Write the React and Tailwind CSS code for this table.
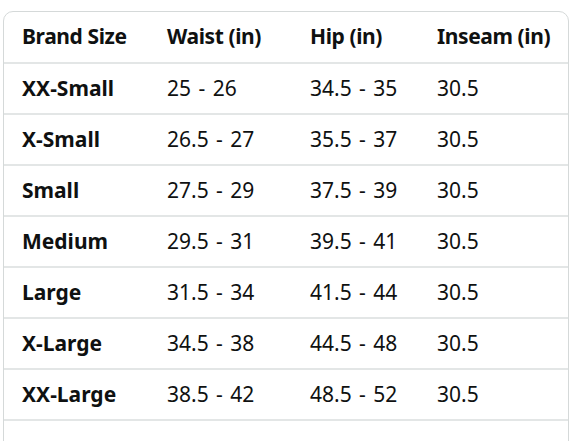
const rows = [
  ["XX-Small", "25 - 26", "34.5 - 35", "30.5"],
  ["X-Small", "26.5 - 27", "35.5 - 37", "30.5"],
  ["Small", "27.5 - 29", "37.5 - 39", "30.5"],
  ["Medium", "29.5 - 31", "39.5 - 41", "30.5"],
  ["Large", "31.5 - 34", "41.5 - 44", "30.5"],
  ["X-Large", "34.5 - 38", "44.5 - 48", "30.5"],
  ["XX-Large", "38.5 - 42", "48.5 - 52", "30.5"],
];

export default function App() {
  return (
    <div className="h-[441px] overflow-hidden bg-white pl-[3px] pt-[11px] font-['Noto_Sans',sans-serif] text-[#0f1111]">
      <div className="w-[566px] overflow-hidden rounded-t-[10px] border border-[#d5d9d9]">
        <table className="w-full border-collapse text-left text-[21px]">
          <colgroup>
            <col className="w-[145px]" />
            <col className="w-[143px]" />
            <col className="w-[127px]" />
            <col />
          </colgroup>
          <thead>
            <tr className="h-[51px] border-b-2 border-[#e3e6e6] tracking-[-0.4px]">
              <th className="pl-[18px] font-bold">Brand Size</th>
              <th className="pl-[18px] font-bold">Waist (in)</th>
              <th className="pl-[18px] font-bold">Hip (in)</th>
              <th className="pl-[18px] font-bold">Inseam (in)</th>
            </tr>
          </thead>
          <tbody>
            {rows.map((r) => (
              <tr key={r[0]} className="h-[51px] border-b-2 border-[#e3e6e6] [word-spacing:2px]">
                <td className="pl-[18px] font-bold">{r[0]}</td>
                <td className="pl-[18px]">{r[1]}</td>
                <td className="pl-[18px]">{r[2]}</td>
                <td className="pl-[18px]">{r[3]}</td>
              </tr>
            ))}
            <tr className="h-[51px]">
              <td colSpan={4}></td>
            </tr>
          </tbody>
        </table>
      </div>
    </div>
  );
}
